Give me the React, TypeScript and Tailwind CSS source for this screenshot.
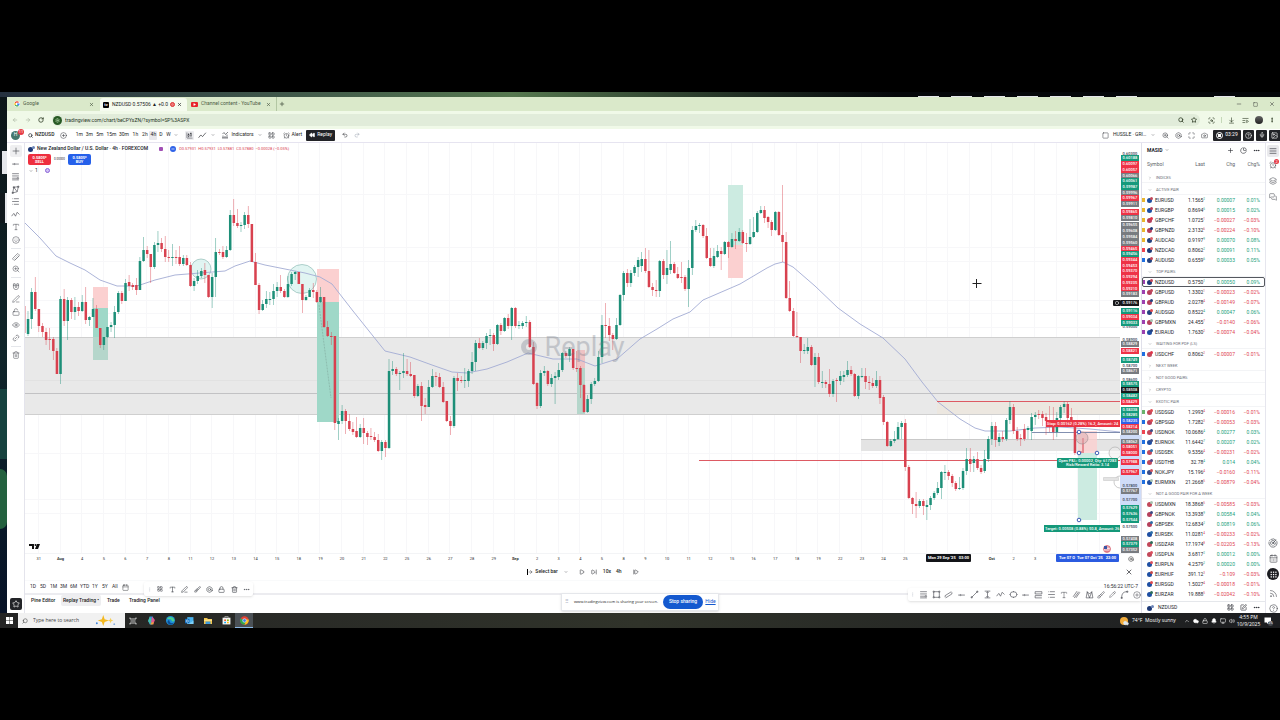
import {
  AlarmClock, ArrowDownToLine, ArrowLeft, ArrowRight, Bell, Bolt, Brush, Calendar, CalendarDays, Camera, ChartCandlestick,
  ChartPie, ChevronDown, ChevronRight, ChevronUp, Circle, CircleHelp, CirclePlus, Cloud, Ellipsis, EllipsisVertical,
  Eye, Image, Layers, LayoutGrid, Link2, ListVideo, Lock, LockOpen, Magnet, Maximize, MessagesSquare,
  Mic, Minus, Monitor, PenLine, Pencil, Play, Plus, Radar, Redo2, Rewind, RotateCw, Rss, Ruler, ScanSearch, Search,
  Settings, SkipForward, Smile, Square, SquarePen, Star, StepForward, TextAlignJustify, Trash2, Type, Undo2,
  Volume2, X, ZoomIn,
} from "lucide-react";

const UP = "#1d8f78";
const DOWN = "#d8414f";

// high, body top, body bottom, low, 1 = up / 0 = down
const candles: number[][] = [
  [311, 319, 334, 336, 1], [288, 292, 319, 329, 1], [277, 292, 309, 311, 0], [309, 309, 326, 332, 0], [323, 326, 332, 337, 0],
  [328, 332, 340, 345, 0], [328, 339, 340, 350, 0], [337, 339, 351, 360, 0], [348, 351, 374, 374, 0], [296, 299, 374, 384, 1],
  [289, 299, 321, 326, 0], [297, 300, 321, 340, 1], [298, 300, 312, 319, 0], [297, 307, 312, 320, 1], [302, 307, 311, 316, 0],
  [295, 302, 311, 312, 1], [287, 302, 320, 324, 0], [316, 317, 320, 326, 1], [298, 309, 317, 317, 1], [305, 309, 328, 328, 0],
  [328, 328, 345, 348, 0], [337, 337, 345, 350, 1], [327, 327, 337, 338, 1], [322, 325, 327, 332, 1], [306, 312, 325, 338, 1],
  [291, 293, 312, 314, 1], [291, 293, 301, 304, 0], [279, 283, 301, 301, 1], [275, 282, 286, 291, 0], [283, 285, 287, 290, 0],
  [278, 285, 290, 295, 0], [257, 261, 290, 290, 1], [237, 250, 261, 262, 1], [246, 250, 254, 258, 0], [254, 254, 267, 283, 0],
  [242, 245, 267, 269, 1], [231, 243, 245, 252, 1], [238, 243, 249, 252, 0], [236, 249, 257, 262, 0], [250, 257, 258, 262, 0],
  [244, 257, 258, 266, 1], [250, 257, 258, 264, 0], [246, 257, 264, 266, 0], [255, 258, 264, 266, 1], [255, 258, 265, 266, 0],
  [262, 265, 286, 287, 0], [278, 281, 286, 291, 1], [270, 276, 281, 284, 1], [268, 271, 276, 278, 1], [263, 270, 275, 283, 0],
  [275, 275, 297, 298, 0], [273, 277, 297, 308, 1], [238, 252, 277, 297, 1], [249, 252, 253, 255, 0], [246, 252, 257, 259, 0],
  [246, 250, 257, 258, 1], [210, 215, 250, 251, 1], [199, 215, 223, 226, 0], [209, 223, 226, 228, 0], [222, 225, 226, 232, 1],
  [212, 215, 225, 229, 1], [206, 215, 224, 228, 0], [224, 224, 262, 262, 0], [253, 262, 285, 285, 0], [283, 285, 310, 314, 0],
  [300, 304, 310, 311, 1], [291, 299, 304, 308, 1], [292, 299, 300, 305, 1], [284, 291, 299, 305, 1], [282, 287, 291, 297, 1],
  [275, 287, 291, 293, 0], [289, 291, 297, 298, 0], [276, 284, 297, 298, 1], [272, 274, 284, 286, 1], [271, 272, 274, 280, 1],
  [272, 272, 284, 284, 0], [284, 284, 300, 313, 0], [295, 297, 300, 301, 1], [288, 290, 297, 297, 1], [283, 290, 292, 298, 0],
  [290, 292, 302, 303, 0], [287, 297, 302, 303, 1], [297, 297, 327, 328, 0], [321, 327, 336, 337, 0], [332, 336, 337, 345, 0],
  [336, 336, 423, 430, 0], [418, 421, 424, 440, 1], [405, 411, 421, 424, 1], [409, 411, 421, 434, 0], [414, 421, 429, 431, 0],
  [422, 429, 432, 435, 0], [417, 431, 437, 438, 0], [424, 428, 437, 438, 1], [418, 428, 433, 444, 0], [431, 433, 437, 445, 0],
  [428, 436, 437, 440, 0], [432, 437, 440, 442, 0], [434, 440, 451, 452, 0], [440, 442, 451, 460, 1], [440, 442, 448, 457, 0],
  [359, 371, 448, 449, 1], [361, 369, 371, 375, 1], [367, 369, 374, 376, 0], [371, 373, 374, 390, 1], [353, 371, 373, 378, 1],
  [359, 371, 374, 376, 0], [362, 374, 376, 377, 0], [375, 375, 396, 398, 0], [384, 386, 396, 397, 1], [382, 386, 406, 421, 0],
  [398, 405, 407, 414, 0], [380, 387, 407, 407, 1], [369, 376, 387, 388, 1], [372, 376, 377, 386, 0], [373, 377, 387, 388, 0],
  [382, 387, 402, 403, 0], [401, 401, 421, 422, 0], [416, 421, 426, 435, 0], [376, 378, 426, 428, 1], [373, 378, 381, 391, 0],
  [376, 380, 381, 383, 0], [368, 380, 381, 388, 1], [369, 371, 381, 387, 1], [352, 362, 371, 374, 1], [340, 343, 362, 371, 1],
  [338, 343, 348, 349, 0], [341, 343, 348, 350, 1], [333, 336, 343, 349, 1], [329, 335, 336, 345, 1], [333, 335, 344, 351, 0],
  [324, 325, 344, 345, 1], [323, 325, 331, 335, 0], [317, 318, 331, 332, 1], [314, 318, 326, 329, 0], [307, 308, 326, 340, 1],
  [307, 308, 326, 328, 0], [321, 325, 326, 329, 1], [321, 323, 326, 329, 1], [316, 322, 323, 327, 1], [320, 322, 347, 348, 0],
  [342, 347, 384, 385, 0], [382, 383, 406, 409, 0], [370, 373, 406, 408, 1], [366, 371, 373, 376, 1], [370, 371, 384, 386, 0],
  [374, 378, 384, 387, 1], [372, 376, 378, 404, 1], [363, 370, 377, 380, 1], [352, 353, 370, 372, 1], [351, 353, 356, 358, 0],
  [347, 349, 356, 362, 1], [349, 349, 368, 370, 0], [351, 368, 369, 372, 0], [366, 368, 385, 398, 0], [384, 385, 412, 413, 0],
  [395, 399, 412, 413, 1], [382, 384, 399, 404, 1], [378, 381, 384, 386, 1], [351, 357, 381, 382, 1], [315, 325, 357, 363, 1],
  [303, 325, 326, 338, 0], [318, 326, 335, 341, 0], [333, 335, 339, 350, 0], [318, 325, 339, 340, 1], [294, 295, 325, 326, 1],
  [271, 273, 295, 301, 1], [269, 273, 283, 287, 0], [270, 273, 283, 287, 1], [265, 267, 273, 276, 1], [257, 260, 267, 277, 1],
  [252, 259, 266, 272, 1], [248, 259, 271, 273, 0], [250, 271, 287, 288, 0], [283, 287, 290, 296, 0], [280, 290, 291, 297, 0],
  [260, 261, 291, 297, 1], [259, 261, 275, 279, 0], [250, 268, 275, 284, 1], [241, 264, 270, 274, 1], [262, 264, 273, 274, 0],
  [267, 274, 278, 279, 0], [262, 277, 278, 283, 0], [275, 277, 289, 291, 0], [260, 268, 289, 307, 1], [226, 230, 268, 275, 1],
  [220, 226, 230, 232, 1], [223, 225, 226, 233, 1], [224, 225, 236, 238, 0], [228, 236, 258, 259, 0], [248, 258, 266, 267, 0],
  [248, 256, 266, 268, 1], [245, 251, 257, 258, 1], [247, 251, 254, 270, 0], [241, 242, 254, 255, 1], [241, 242, 247, 258, 0],
  [233, 239, 247, 248, 1], [231, 239, 241, 249, 0], [228, 232, 241, 242, 1], [230, 232, 243, 244, 0], [233, 243, 244, 252, 0],
  [219, 237, 244, 245, 1], [217, 232, 237, 238, 1], [211, 213, 232, 233, 1], [206, 210, 213, 214, 1], [206, 210, 218, 223, 0],
  [216, 217, 222, 228, 0], [220, 222, 230, 236, 0], [211, 212, 230, 231, 1], [211, 212, 235, 236, 0], [185, 235, 242, 262, 0],
  [232, 242, 298, 299, 0], [281, 298, 311, 312, 0], [308, 311, 336, 337, 0], [312, 336, 337, 338, 0], [337, 337, 351, 363, 0],
  [344, 350, 351, 354, 1], [338, 347, 351, 354, 1], [345, 347, 365, 366, 0], [353, 357, 365, 387, 1], [353, 357, 382, 384, 0],
  [371, 382, 383, 388, 1], [380, 382, 384, 388, 0], [369, 384, 394, 397, 0], [379, 381, 394, 397, 1], [378, 380, 381, 402, 0],
  [371, 376, 381, 385, 1], [371, 375, 377, 382, 1], [361, 370, 375, 377, 1], [366, 370, 374, 376, 0], [373, 374, 396, 397, 0],
  [375, 376, 396, 399, 1], [368, 376, 377, 378, 1], [368, 376, 382, 389, 0], [376, 382, 383, 390, 0], [378, 383, 386, 388, 0],
  [371, 380, 386, 388, 1], [376, 380, 398, 404, 0], [395, 397, 422, 425, 0], [421, 422, 446, 447, 0], [439, 441, 446, 447, 1],
  [431, 439, 441, 443, 1], [422, 427, 439, 440, 1], [421, 423, 427, 439, 1], [419, 423, 467, 471, 0], [465, 467, 498, 499, 0],
  [497, 498, 504, 514, 0], [492, 504, 506, 518, 0], [499, 501, 506, 508, 1], [499, 501, 506, 515, 0], [500, 505, 507, 520, 1],
  [496, 498, 505, 510, 1], [491, 493, 498, 500, 1], [482, 488, 493, 495, 1], [471, 472, 488, 499, 1], [465, 472, 473, 480, 1],
  [470, 472, 476, 480, 0], [474, 476, 483, 487, 0], [481, 483, 489, 491, 0], [477, 488, 489, 490, 1], [468, 471, 488, 490, 1],
  [448, 459, 471, 475, 1], [448, 459, 464, 472, 0], [456, 459, 463, 472, 1], [452, 459, 468, 470, 0], [465, 468, 472, 474, 0],
  [450, 459, 471, 473, 1], [436, 439, 459, 462, 1], [422, 426, 439, 445, 1], [422, 426, 440, 447, 0], [433, 437, 442, 446, 1],
  [431, 437, 439, 442, 0], [418, 420, 439, 441, 1], [401, 407, 420, 424, 1], [404, 407, 431, 434, 0], [427, 431, 439, 441, 0],
  [434, 438, 439, 446, 0], [424, 429, 439, 441, 0], [426, 428, 430, 439, 1], [413, 417, 431, 440, 1], [412, 415, 417, 425, 1],
  [410, 414, 415, 419, 0], [411, 414, 418, 426, 0], [413, 417, 421, 435, 0], [406, 421, 424, 432, 0], [407, 424, 432, 440, 0],
  [412, 418, 432, 437, 1], [405, 407, 418, 420, 1], [401, 404, 407, 413, 1], [402, 404, 418, 424, 0], [408, 417, 424, 426, 0],
  [422, 423, 453, 455, 0],
];

const xOf = (i: number) => 28 + i * 3.61;

const average =
  "25,223 40,238 56,256 70,263 85,270 100,280 117,286 137,286 155,280 175,275 200,273 225,271 235,266 250,261 265,265 285,269 305,273 320,277 332,284 353,311 385,351 410,357 432,365 452,372 467,373 487,369 507,362 528,353 553,359 577,359 595,366 617,359 640,339 657,329 673,319 690,312 703,300 740,284 767,268 775,264 783,262 793,267 815,286 838,308 860,324 883,338 905,359 922,382 938,402 960,419 975,428 985,431 1010,431 1035,428 1060,427 1090,429 1120,432";

const tone: Record<string, string> = {
  p: "text-gray-700 bg-white",
  g: "bg-[#159a7c] text-white",
  r: "bg-[#ee3347] text-white",
  n: "bg-[#787b80] text-white",
  k: "bg-[#17181b] text-white",
  b: "bg-[#2f62e8] text-white",
  l: "text-gray-700",
};

const prices: [number, string, string][] = [
  [154, "0.60300", "p"], [158, "0.60188", "g"], [164, "0.60097", "r"], [170, "0.60057", "r"], [176, "0.60066", "n"],
  [181, "0.60061", "g"], [187, "0.59987", "g"], [193, "0.59996", "n"], [198, "0.59967", "r"], [204, "0.59911", "n"],
  [212, "0.59865", "r"], [218, "0.59810", "n"], [225, "0.59655", "n"], [231, "0.59608", "n"], [237, "0.59584", "n"],
  [243, "0.59560", "n"], [249, "0.59465", "r"], [254, "0.59456", "g"], [260, "0.59344", "r"], [266, "0.59453", "r"],
  [271, "0.59370", "r"], [277, "0.59294", "r"], [283, "0.59235", "r"], [289, "0.59210", "r"], [294, "0.59183", "n"],
  [303, "0.59176", "k"], [327, "0.59000", "p"], [311, "0.59116", "g"], [317, "0.59034", "r"], [323, "0.59033", "g"],
  [340, "0.58900", "p"], [344, "0.58829", "n"], [351, "0.58821", "r"], [360, "0.58749", "g"], [366, "0.58700", "p"],
  [371, "0.58671", "n"], [380, "0.58600", "p"], [384, "0.58575", "g"], [390, "0.58508", "k"], [396, "0.58482", "g"],
  [402, "0.58429", "r"], [410, "0.58338", "g"], [415, "0.58285", "g"], [421, "0.58235", "b"], [427, "0.58214", "r"],
  [432, "0.58200", "n"], [442, "0.58062", "n"], [447, "0.58051", "r"], [453, "0.58000", "r"], [462, "0.57988", "r"],
  [472, "0.57967", "r"], [486, "0.57800", "l"], [491, "0.57767", "n"], [500, "0.57700", "l"], [508, "0.57629", "g"],
  [514, "0.57636", "g"], [520, "0.57544", "g"], [527, "0.57500", "p"], [539, "0.57408", "n"], [544, "0.57379", "g"],
  [550, "0.57352", "n"],
];

const days =
  "31 Aug 4 5 6 7 8 11 12 13 14 15 18 19 20 21 22 25 26 27 28 29 Sep 2 3 4 5 8 9 10 11 12 15 16 17 18 19 22 23 24 25 - - - Oct 2 3 - - -".split(" ");

// symbol, last, small digit, change, change %, flag colour
type Quote = [string, string, string, string, string, string];
type Group = { title: string; open: boolean; rows: Quote[] };

const groups: Group[] = [
  { title: "INDICES", open: false, rows: [] },
  {
    title: "ACTIVE PAIR",
    open: true,
    rows: [
      ["EURUSD", "1.1565", "2", "0.00007", "0.01%", "y"],
      ["EURGBP", "0.8694", "6", "0.00015", "0.02%", "y"],
      ["GBPCHF", "1.0725", "1", "−0.00027", "−0.03%", "y"],
      ["GBPNZD", "2.3132", "6", "−0.00224", "−0.10%", "y"],
      ["AUDCAD", "0.9197", "9", "0.00070", "0.08%", "y"],
      ["NZDCAD", "0.8062", "2", "0.00091", "0.11%", "r"],
      ["AUDUSD", "0.6559", "6", "0.00033", "0.05%", "b"],
    ],
  },
  {
    title: "TOP PAIRS",
    open: true,
    rows: [
      ["NZDUSD", "0.5750", "1", "0.00050", "0.09%", "p"],
      ["GBPUSD", "1.3302", "1", "−0.00023", "−0.02%", "p"],
      ["GBPAUD", "2.0278", "4", "−0.00149", "−0.07%", "p"],
      ["AUDSGD", "0.8522", "4", "0.00047", "0.06%", "p"],
      ["GBPMXN", "24.455", "7", "−0.0140", "−0.06%", "p"],
      ["EURAUD", "1.7630", "2", "−0.00074", "−0.04%", "p"],
    ],
  },
  { title: "WAITING FOR PDF (LS)", open: true, rows: [["USDCHF", "0.8062", "2", "−0.00007", "−0.01%", "b"]] },
  { title: "NEXT WEEK", open: false, rows: [] },
  { title: "NOT GOOD PAIRS", open: false, rows: [] },
  { title: "CRYPTO", open: false, rows: [] },
  {
    title: "EXOTIC PAIR",
    open: true,
    rows: [
      ["USDSGD", "1.2993", "4", "−0.00016", "−0.01%", "g"],
      ["GBPSGD", "1.7282", "3", "−0.00053", "−0.03%", "b"],
      ["USDNOK", "10.0686", "4", "0.00277", "0.03%", "r"],
      ["EURNOK", "11.6442", "7", "0.00207", "0.02%", "b"],
      ["USDSEK", "9.5356", "4", "−0.00231", "−0.02%", "b"],
      ["USDTHB", "32.78", "4", "0.014", "0.04%", "b"],
      ["NOKJPY", "15.196", "4", "−0.0160", "−0.11%", "b"],
      ["EURMXN", "21.2668", "5", "−0.00879", "−0.04%", "b"],
    ],
  },
  {
    title: "NOT A GOOD PAIR FOR A WEEK",
    open: true,
    rows: [
      ["USDMXN", "18.3868", "5", "−0.00585", "−0.03%", ""],
      ["GBPNOK", "13.3938", "9", "0.00584", "0.04%", ""],
      ["GBPSEK", "12.6834", "2", "0.00819", "0.06%", ""],
      ["EURSEK", "11.0281", "4", "−0.00233", "−0.02%", ""],
      ["USDZAR", "17.1974", "8", "−0.02205", "−0.13%", ""],
      ["USDPLN", "3.6817", "2", "0.00012", "0.00%", ""],
      ["EURPLN", "4.2579", "2", "0.00020", "0.00%", ""],
      ["EURHUF", "391.12", "3", "−0.109", "−0.03%", ""],
      ["EURSGD", "1.5027", "4", "−0.00018", "−0.01%", ""],
      ["EURZAR", "19.888", "5", "−0.02042", "−0.10%", ""],
    ],
  },
];

const flags: Record<string, string> = {
  y: "bg-[#e9b62f]",
  r: "bg-[#ee4450]",
  b: "bg-[#1f6fe0]",
  p: "bg-[#9c3fae]",
  g: "bg-[#68b36b]",
  "": "bg-transparent",
};

const coin: Record<string, string> = {
  EUR: "bg-[#1f4fa3]", USD: "bg-[#c2485a]", GBP: "bg-[#b5405c]", CHF: "bg-[#e0354a]", NZD: "bg-[#1e3a78]", AUD: "bg-[#24427f]",
  CAD: "bg-[#d9646d]", SGD: "bg-[#de4a4f]", MXN: "bg-[#a6c3b0]", NOK: "bg-[#3b4d86]", SEK: "bg-[#2e6fa8]", THB: "bg-[#554785]",
  JPY: "bg-[#d25560]", ZAR: "bg-[#2d6e5a]", PLN: "bg-[#db4f5e]", HUF: "bg-[#c6484a]",
};

// drawing-tool glyphs, all on a 16 grid
const glyphs: Record<string, string> = {
  line: "M2 9h3M7 9h7M5 9a1 1 0 1 0 2 0a1 1 0 1 0-2 0",
  fib: "M2 3h12M2 7h12M2 11h9M2 14h12M11 11a1.3 1.3 0 1 0 2.6 0a1.3 1.3 0 1 0-2.6 0",
  pattern: "M3 14L5 4l6 8 2-9M3 14l8-2M5 4l8-1M2 13h2v2H2zM4 3h2v2H4zM12 2h2v2h-2z",
  forecast: "M5 3h9M2 3h1M2 8h12M5 13h9M2 13h1",
  waves: "M1 11l4-5 3 5 3-7 4 4",
  rect: "M4 3h8M4 13h8M3 4v8M13 4v8M2 2h2v2H2zM12 2h2v2h-2zM2 12h2v2H2zM12 12h2v2h-2z",
  channel: "M2 10l11-7M3 14l11-7M2 10v3M14 4v3",
  trend: "M3 13L13 3M2 12h2v2H2zM12 2h2v2h-2z",
  range: "M3 2h10M3 14h10M8 3v10M6 5l2-2 2 2M6 11l2 2 2-2",
  ellipse: "M2 8a6 5 0 1 0 12 0a6 5 0 1 0-12 0M1 8h2M13 8h2M8 2v2M8 12v2",
  long: "M2 3h12v4H2zM2 10h12M2 14h12M2 10v4",
  parallel: "M2 12L9 2M7 14L14 4M4 14l8-11",
  fan: "M2 14L4 3l4 11 4-11 2 11M2 14h12M4 3l4 4 4-4",
  curve: "M3 14c0-8 3-11 10-11M2 13h2v2H2zM12 2h2v2h-2z",
  steps: "M1 12l4-5 3 3 6-7",
  indicators: "M2 14h12M3 6l3-3 3 4 5-5M4 9v5M8 10v4M12 7v7",
};

const Glyph = ({ name, cls = "size-[9px]" }: { name: string; cls?: string }) => (
  <svg viewBox="0 0 16 16" className={cls} fill="none" stroke="currentColor" strokeWidth="1.1">
    <path d={glyphs[name]} />
  </svg>
);

const Pair = ({ name }: { name: string }) => (
  <span className="flex w-[7px] items-start">
    <span className={`mt-px size-[5px] rounded-full ${coin[name.slice(0, 3)]}`} />
    <span className={`-ml-[2px] size-[3px] rounded-full ${coin[name.slice(3)]}`} />
  </span>
);

const TabStrip = () => (
  <div className="flex h-[14px] items-stretch bg-[#dae9ca] text-[5px] text-[#4c5a45]">
    <div className="flex w-[93px] items-center pl-[7px] pr-[6px]">
      <svg viewBox="0 0 24 24" className="mr-[3px] size-[6px] shrink-0">
        <path fill="#fff" d="M0 12a12 12 0 1 1 24 0a12 12 0 1 1-24 0" />
        <path fill="none" stroke="#ea4335" strokeWidth="5" d="M5 8a8 8 0 0 1 13-2" />
        <path fill="none" stroke="#fbbc05" strokeWidth="5" d="M5 16a8 8 0 0 1 0-8" />
        <path fill="none" stroke="#34a853" strokeWidth="5" d="M17 18a8 8 0 0 1-12-2" />
        <path fill="none" stroke="#4285f4" strokeWidth="5" d="M12 12h8a8 8 0 0 1-3 6" />
      </svg>
      <span className="flex-1">Google</span>
      <X size={5} strokeWidth={3} />
    </div>
    <div className="mt-px flex w-[87px] items-center rounded-t-[3px] bg-[#f5fbef] pl-[3px] pr-[5px] text-[#222]">
      <span className="mr-[3px] flex size-[6px] shrink-0 items-center justify-center rounded-[1px] bg-black text-[4px] font-bold leading-none text-white">tv</span>
      <span className="whitespace-nowrap">NZDUSD 0.57506 ▲ +0.0</span>
      <span className="mx-auto size-[5px] shrink-0 rounded-full border border-[#d33] bg-[#e77]" />
      <X size={5} strokeWidth={3} />
    </div>
    <div className="flex w-[90px] items-center border-r border-[#b3c7a3] pl-1 pr-[5px]">
      <span className="mr-[3px] flex h-[5px] w-[7px] shrink-0 items-center justify-center rounded-[1px] bg-[#e8212b]">
        <Play size={3} fill="#fff" color="#fff" />
      </span>
      <span className="whitespace-nowrap">Channel content - YouTube</span>
      <X size={5} strokeWidth={3} className="ml-auto" />
    </div>
    <button aria-label="New tab" className="px-[2px]"><Plus size={6} strokeWidth={3} /></button>
    <div className="ml-auto flex items-center gap-[11px] pr-[5px] text-[#333]">
      <Minus size={6} />
      <Square size={5} />
      <X size={6} />
    </div>
  </div>
);

const AddressBar = () => (
  <div className="flex h-[18px] items-center bg-[#f0f9e8] text-[#28361f]">
    <div className="flex w-[45px] items-center gap-[7px] pl-[5px]">
      <ArrowLeft size={6} className="text-[#9aa691]" />
      <ArrowRight size={6} className="text-[#9aa691]" />
      <RotateCw size={6} strokeWidth={3} />
    </div>
    <div className="flex h-3 flex-1 items-center rounded-full bg-[#e1ecda] pl-px pr-[3px]">
      <span className="mr-[3px] flex size-[9px] items-center justify-center rounded-full bg-[#285a24]">
        <Settings size={5} color="#d8f5cf" />
      </span>
      <input
        aria-label="Address"
        className="h-3 min-w-0 flex-1 bg-transparent text-[5px] outline-none"
        defaultValue="tradingview.com/chart/beCPYsZN/?symbol=SP%3ASPX"
      />
      <Search size={6} strokeWidth={3} className="mr-[7px]" />
      <Star size={6} strokeWidth={3} />
    </div>
    <div className="flex w-[80px] items-center justify-between pl-2 pr-[5px]">
      <ScanSearch size={7} />
      <span className="h-[6px] w-px bg-[#c5d8b8]" />
      <ArrowDownToLine size={7} />
      <ListVideo size={7} />
      <span className="size-[8px] rounded-full bg-gradient-to-b from-[#666] to-[#222]" />
      <EllipsisVertical size={6} strokeWidth={3} />
    </div>
  </div>
);

const intervals: [string, string][] = [
  ["1m", "w-[10px]"], ["3m", "w-[10px]"], ["5m", "w-[11px]"], ["15m", "w-[12px]"], ["30m", "w-[13px]"],
  ["1h", "w-[10px]"], ["2h", "w-[9px]"], ["4h", "w-[8px] rounded-[1px] bg-[#e8e8ec]"], ["D", "w-[7px]"], ["W", "w-[8px]"],
];

const ChartToolbar = () => (
  <div className="flex h-[14px] items-center border-b border-[#e6e4f0] bg-white pb-px text-[5px] text-[#1c1e24]">
    <div className="relative ml-1 flex size-[9px] items-center justify-center rounded-full bg-[#44776d] text-white">
      H
      <span className="absolute -right-[4px] -top-[2px] flex size-[6px] items-center justify-center rounded-full bg-[#e53945] text-[4px] leading-none">11</span>
    </div>
    <button className="ml-2 flex items-center gap-[2px] font-medium"><Search size={5} strokeWidth={3} />NZDUSD</button>
    <CirclePlus size={7} strokeWidth={1.5} className="ml-[6px]" />
    <div className="ml-[7px] flex">
      {intervals.map(([label, cls]) => (
        <button key={label} className={`h-[9px] text-center ${cls}`}>{label}</button>
      ))}
    </div>
    <ChevronDown size={4} className="ml-[2px]" />
    <span className="ml-[7px] flex size-[9px] items-center justify-center rounded-[1px] bg-[#ececef]"><ChartCandlestick size={7} strokeWidth={1.5} /></span>
    <Glyph name="steps" cls="ml-1 size-[9px]" />
    <ChevronDown size={4} className="ml-1" />
    <button className="ml-[6px] flex items-center gap-[2px]"><Glyph name="indicators" cls="size-2" />Indicators</button>
    <ChevronDown size={4} className="ml-1" />
    <LayoutGrid size={7} strokeWidth={1.5} className="ml-[6px]" />
    <button className="ml-2 flex items-center gap-[2px]"><AlarmClock size={7} strokeWidth={1.5} />Alert</button>
    <button className="ml-1 flex h-[11px] items-center gap-[2px] rounded-[1px] bg-[#222327] px-[3px] text-white">
      <Rewind size={6} fill="#fff" />Replay
    </button>
    <Undo2 size={6} className="ml-[7px]" />
    <Redo2 size={6} className="ml-[6px] text-gray-400" />
    <div className="ml-auto flex items-center">
      <Square size={7} strokeWidth={1.5} />
      <span className="ml-1 mr-[2px] w-[36px] whitespace-nowrap">HUSSLE · GRI…</span>
      <ChevronDown size={4} />
      <div className="ml-[7px] mr-[5px] flex items-center gap-[6px]">
        <ZoomIn size={7} strokeWidth={1.5} />
        <Bolt size={7} strokeWidth={1.5} />
        <Maximize size={7} strokeWidth={1.5} />
        <Camera size={7} strokeWidth={1.5} />
      </div>
      <div className="flex h-[11px] gap-[2px] text-white">
        <span className="flex w-7 items-center justify-center gap-[2px] rounded-[1px] bg-[#222327]">
          <span className="flex size-[7px] items-center justify-center rounded-full border border-white"><span className="size-[3px] bg-white" /></span>
          03:29
        </span>
        <span className="flex w-[11px] items-center justify-center rounded-[1px] bg-[#222327]"><CircleHelp size={7} /></span>
        <span className="flex w-[11px] items-center justify-center rounded-[1px] bg-[#222327]"><Mic size={6} /></span>
        <span className="flex w-[11px] items-center justify-center rounded-l-[1px] bg-[#222327]"><Image size={7} /></span>
      </div>
    </div>
  </div>
);

const DrawingTools = () => {
  const btn = "flex h-3 w-[12px] items-center justify-center";
  return (
    <div className="flex w-[18px] shrink-0 flex-col items-center border-r border-[#e4e4ec] bg-white pt-[2px] text-[#44464e]">
      <div className="flex h-[101px] flex-col justify-between">
        <button aria-label="Cross" className={`${btn} rounded-[2px] bg-[#efeff1]`}><Plus size={10} strokeWidth={1.5} /></button>
        <button aria-label="Trend line" className={btn}><Glyph name="line" /></button>
        <button aria-label="Fib" className={btn}><Glyph name="fib" /></button>
        <button aria-label="Pattern" className={btn}><Glyph name="pattern" /></button>
        <button aria-label="Forecast" className={btn}><Glyph name="forecast" /></button>
        <button aria-label="Waves" className={btn}><Glyph name="waves" /></button>
        <button aria-label="Text" className={btn}><Type size={8} strokeWidth={1.5} /></button>
        <button aria-label="Icons" className={btn}><Smile size={8} strokeWidth={1.5} /></button>
      </div>
      <span className="my-[2px] h-px w-[10px] bg-gray-200" />
      <button aria-label="Measure" className={btn}><Ruler size={8} strokeWidth={1.5} className="rotate-90" /></button>
      <button aria-label="Zoom" className={btn}><ZoomIn size={8} strokeWidth={1.5} /></button>
      <span className="my-[2px] h-px w-[10px] bg-gray-200" />
      <div className="flex h-[64px] flex-col justify-between">
        <button aria-label="Magnet" className={btn}><Magnet size={8} strokeWidth={1.5} className="rotate-[135deg]" /></button>
        <button aria-label="Keep drawing" className={btn}><PenLine size={8} strokeWidth={1.5} /></button>
        <button aria-label="Lock" className={btn}><LockOpen size={8} strokeWidth={1.5} /></button>
        <button aria-label="Hide" className={btn}><Eye size={8} strokeWidth={1.5} /></button>
        <button aria-label="Link" className={btn}><Link2 size={8} strokeWidth={1.5} className="-rotate-45" /></button>
      </div>
      <span className="my-[2px] h-px w-[10px] bg-gray-200" />
      <button aria-label="Remove" className={btn}><Trash2 size={8} strokeWidth={1.5} /></button>
      <button aria-label="Favorites" className="mb-[3px] mt-auto flex size-3 items-center justify-center rounded-[2px] bg-[#232428] text-white"><Star size={8} /></button>
    </div>
  );
};

const Plot = () => (
  <svg viewBox="25 143 1095 410" preserveAspectRatio="xMidYMid slice" className="h-[410px] w-full">
    <g stroke="#f7f7f9">
      {days.map((_, i) => <path key={i} d={`M${38.5 + Math.round(i * 21.65)} 143V553`} />)}
      {[194, 247, 261, 300, 313, 327, 453, 499, 513].map((y) => <path key={y} d={`M25 ${y}.5H1120`} />)}
    </g>
    <path d="M25 337H1120V414H25z" fill="#e9e9e9" />
    <path d="M937 402H1120V414H937z" fill="#ece7e0" />
    <path d="M25 380.5H1120" stroke="#e2e2e2" />
    <path d="M25 337.5H1120M25 414.5H1120" stroke="#cfcfcf" />
    <path d="M25 393.5H1120" stroke="#c2c2c4" />
    <path d="M861 439H1120V451H861z" fill="#e4e4e4" />
    <path d="M861 439.5H1120" stroke="#c9c9c9" />

    <g fill="#fbd0d0">
      <path d="M93 287h15v21h-15z" />
      <path d="M317 269h22v33h-22z" />
      <path d="M728 245h15v33h-15z" />
      <path d="M1078 431h19v22h-19z" opacity="0.8" />
    </g>
    <path d="M577 350h8v18h-8z" fill="#eec3c4" />
    <g fill="#9fd8c8">
      <path d="M93 308h15v29h-15z" />
      <path d="M317 302h22v120h-22z" />
    </g>
    <path d="M93 337h15v23h-15zM577 368h8v46h-8z" fill="#b5d6cb" />
    <path d="M728 185h15v60h-15zM1078 453h19v67h-19z" fill="#ccebe1" />
    <g fill="#cdeeea" fillOpacity="0.6" stroke="#8fbcb6" strokeWidth="0.7">
      <circle cx="201" cy="269" r="10" />
      <circle cx="302" cy="279" r="14.5" />
    </g>
    <path d="M319 305L331 398" stroke="#7fa79c" strokeWidth="0.6" strokeDasharray="2 1" />

    <polyline points={average} fill="none" stroke="#a3abd4" strokeWidth="0.9" />
    <path d="M937 401.5H1120M699 460.5H1120" stroke="#dd5a63" />
    <path d="M1032 432.5H1120" stroke="#62749c" strokeWidth="0.8" />

    {candles.map(([high, top, bottom, low, up], i) => (
      <g key={i} fill={up ? UP : DOWN}>
        <rect x={xOf(i) - 0.3} y={high} width="0.6" height={low - high} opacity="0.7" />
        <rect x={xOf(i) - 1.2} y={top} width="2.5" height={Math.max(bottom - top, 1)} />
      </g>
    ))}
    <path d="M25.5 306V333" stroke="#efb6bb" />
    <path d="M1083 438v13M1080 452h4" stroke={DOWN} />

    <circle cx="1082" cy="438" r="6" fill="#d9a9ad" fillOpacity="0.5" stroke="#9b8f92" strokeWidth="0.6" />
    <circle cx="1115" cy="453" r="6" fill="#eee" fillOpacity="0.5" stroke="#a8a8a8" strokeWidth="0.6" />
    <path d="M1120 476a6 6 0 0 0 0 12" fill="none" stroke="#a8a8a8" strokeWidth="0.6" />
    <path d="M1103.5 477.5h15v3h-15z" fill="#e3e3e3" stroke="#c9c9c9" strokeWidth="0.6" />
    <g fill="#fff" stroke="#3c5bb5">
      <circle cx="1079" cy="432" r="1.8" />
      <circle cx="1079" cy="453" r="1.8" />
      <circle cx="1097" cy="453" r="1.8" />
      <circle cx="1079" cy="520" r="1.8" />
    </g>
    <path d="M972.5 283.5h9M976.5 279v9" stroke="#222" />
    <g>
      <circle cx="1107" cy="549" r="3.5" fill="#f6dfe3" stroke="#d5596a" strokeWidth="0.8" />
      <path d="M1104 546h3v3h-3z" fill="#3b57a5" />
      <path d="M1107 547h3M1105 550h5M1105 551.5h4" stroke="#d5596a" strokeWidth="0.7" />
    </g>
    <path d="M29 544h5v5h-2v-3h-3zM37 544h3l-2 5h-3z" fill="#111" />
    <circle cx="35.5" cy="545" r="1" fill="#111" />
  </svg>
);

const Legend = () => (
  <div className="absolute left-[3px] top-[2px] text-[5px] leading-none text-[#22242a]">
    <div className="flex h-[7px] items-center">
      <span className="mr-[2px] flex items-start">
        <span className="mt-px size-[5px] rounded-full bg-[#1e3a78]" />
        <span className="-ml-px size-[3px] rounded-full bg-[#6d86b8]" />
      </span>
      <h1 className="w-[122px] whitespace-nowrap font-medium">New Zealand Dollar / U.S. Dollar · 4h · FOREXCOM</h1>
      <span className="mr-[7px] size-1 rounded-[1px] bg-[#a14fb5]" />
      <span className="mr-[3px] flex size-[6px] items-center justify-center rounded-full bg-[#2f62e8] text-white"><Minus size={4} strokeWidth={4} /></span>
      <p className="whitespace-nowrap text-[4px] text-[#d8414f]">
        O0.57931 &nbsp;H0.57931 &nbsp;L0.57881 &nbsp;C0.57880 &nbsp;−0.00028 (−0.05%)
      </p>
    </div>
    <div className="mt-[2px] flex items-center text-center">
      <button className="h-[11px] w-[23px] rounded-[2px] bg-[#ee2f3f] text-[4px] font-bold leading-[4px] text-white">0.5805⁰<br />SELL</button>
      <span className="w-[17px] text-[3px]">0.00000</span>
      <button className="h-[11px] w-[23px] rounded-[2px] bg-[#2560ea] text-[4px] font-bold leading-[4px] text-white">0.5805⁰<br />BUY</button>
    </div>
    <div className="mt-[3px] flex items-center gap-[2px] pl-px">
      <ChevronDown size={4} />1
      <span className="ml-[5px] size-[5px] rounded-full border border-[#8a63d8] bg-[#cfc0f3]" />
    </div>
  </div>
);

const ChartPane = () => (
  <div className="flex">
    <div className="relative min-w-0 flex-1 overflow-hidden">
      <Plot />
      <div className="pointer-events-none absolute inset-x-0 top-[190px] flex items-center justify-center gap-2 text-[27px] leading-7 text-gray-500 opacity-30">
        <span className="size-[16px] rounded-full border-[5px] border-gray-500" />
        Replay
      </div>
      <Legend />
      <span className="absolute right-0 top-[277px] h-[7px] w-[74px] whitespace-nowrap bg-[#ea3443] pl-px text-[4px] font-medium leading-[7px] text-white">
        Stop: 0.00162 (0.28%) 16.2, Amount: 24
      </span>
      <span className="absolute right-[2px] top-[315px] h-[10px] w-[61px] whitespace-nowrap rounded-[1px] bg-[#149879] pt-px text-center text-[4px] font-medium leading-[4px] text-white">
        Open P&amp;L: 0.00002, Qty: 617283<br />Risk/Reward Ratio: 3.14
      </span>
      <span className="absolute right-0 top-[382px] h-[7px] w-[76px] whitespace-nowrap bg-[#149879] pl-px text-[4px] font-medium leading-[7px] text-white">
        Target: 0.00508 (0.88%) 50.8, Amount: 26
      </span>
    </div>
    <div className="relative w-[21px] shrink-0 bg-white text-[4px] font-medium">
      <span className="absolute left-0 top-[292px] h-[86px] w-[21px] bg-[#cfdcf8]" />
      <span className="absolute -left-[7px] top-[157px] flex h-[6px] w-2 items-center justify-center rounded-[1px] bg-[#17181b] text-white"><Circle size={4} strokeWidth={3} /></span>
      {prices.map(([y, label, t]) => (
        <span key={label} style={{ top: y - 146 }} className={`absolute left-px h-[6px] w-[18px] text-center leading-[6px] ${tone[t]}`}>
          {label}
        </span>
      ))}
    </div>
  </div>
);

const TimeAxis = () => (
  <div className="relative flex h-[10px] items-center border-t border-gray-100 text-[4px] text-[#333]">
    <div className="ml-[3px] mr-[9px] grid flex-1 grid-cols-[repeat(50,minmax(0,1fr))] text-center">
      {days.map((d, i) => (
        <span key={i} className={d.length > 2 ? "font-bold" : ""}>{d === "-" ? "" : d}</span>
      ))}
    </div>
    <div className="flex w-[21px] justify-center"><Bolt size={6} /></div>
    <span className="absolute right-[170px] top-0 h-2 w-[45px] rounded-[1px] bg-[#131418] text-center font-bold leading-[8px] text-white">Mon 29 Sep '25 &nbsp; 03:00</span>
    <span className="absolute right-[22px] top-0 h-2 w-[63px] rounded-[1px] bg-[#2b5be0] text-center font-bold leading-[8px] text-white">Tue 07 O &nbsp;Tue 07 Oct '25 &nbsp; 22:00</span>
  </div>
);

const ReplayBar = () => (
  <div className="relative flex h-[17px] items-center justify-center text-[5px] font-medium">
    <button className="flex items-center gap-[2px]"><ArrowRight size={6} className="border-l border-black" />Select bar<ChevronDown size={4} className="ml-[4px]" /></button>
    <button aria-label="Play" className="ml-[11px]"><Play size={6} /></button>
    <button aria-label="Forward" className="ml-[6px]"><SkipForward size={6} /></button>
    <button className="ml-[6px]">10x</button>
    <button className="ml-[5px]">4h</button>
    <button aria-label="Jump to real time" className="ml-[11px]"><StepForward size={6} className="rotate-180 -scale-x-100" /></button>
    <button aria-label="Close replay" className="absolute right-2"><X size={8} /></button>
  </div>
);

const Ranges = () => (
  <div className="relative flex h-[13px] items-center border-t border-gray-50 pl-[5px] text-[5px] text-[#2b2d33]">
    {["1D", "5D", "1M", "3M", "6M"].map((r) => <button key={r} className="w-[10px] text-left">{r}</button>)}
    <button className="w-[12px] text-left">YTD</button>
    {["1Y", "5Y", "All"].map((r) => <button key={r} className="w-[10px] text-left">{r}</button>)}
    <Calendar size={7} strokeWidth={1.5} />
    <span className="ml-auto pr-[3px]">16:56:22 UTC-7</span>
    <div className="absolute left-[119px] top-px z-10 flex h-[14px] w-[109px] items-center justify-between rounded-[2px] bg-white px-[3px] text-[#44464e] shadow">
      <EllipsisVertical size={5} className="text-gray-300" />
      <LayoutGrid size={6} /><Type size={7} /><PenLine size={7} /><Brush size={7} /><Bolt size={7} /><Lock size={7} /><Trash2 size={7} /><Ellipsis size={7} />
    </div>
    <div className="absolute right-0 top-[7px] z-10 flex h-[13px] w-[233px] items-center justify-between rounded-l-[2px] bg-white pl-[2px] text-[#44464e] shadow">
      <EllipsisVertical size={5} className="text-gray-300" />
      <Glyph name="fib" /><Glyph name="rect" /><Glyph name="channel" /><Glyph name="line" /><Glyph name="trend" /><Glyph name="range" />
      <Glyph name="waves" /><Glyph name="ellipse" /><Glyph name="line" /><Glyph name="long" /><Glyph name="forecast" /><Type size={8} strokeWidth={1.5} />
      <Glyph name="parallel" /><Glyph name="fan" /><Brush size={8} strokeWidth={1.5} /><Pencil size={7} strokeWidth={1.5} /><Glyph name="curve" /><CirclePlus size={8} strokeWidth={1.5} />
    </div>
  </div>
);

const BottomTabs = () => (
  <div className="relative flex h-5 items-start border-t-2 border-[#ececf0] pl-[6px] text-[5px] font-medium">
    <button className="h-[11px] w-[30px] text-left">Pine Editor</button>
    <button className="h-[11px] w-[40px] rounded-[2px] bg-[#eeeef0]">Replay Trading •</button>
    <button className="ml-[6px] h-[11px] w-[22px] text-left">Trade</button>
    <button className="h-[11px]">Trading Panel</button>
    <div className="absolute -top-[2px] right-[422px] z-10 flex h-[18px] w-[158px] items-center rounded-[1px] border border-gray-200 bg-white pl-[3px] font-normal shadow">
      <span className="mr-[5px] text-gray-400">⠿</span>
      <span className="whitespace-nowrap font-['Open_Sans',sans-serif] text-[4px]">www.tradingview.com is sharing your screen.</span>
      <button className="ml-auto h-[14px] w-10 shrink-0 whitespace-nowrap rounded-full bg-[#1459cf] font-medium text-white">Stop sharing</button>
      <a href="#hide" className="w-[15px] shrink-0 text-center text-[#1459cf] underline">Hide</a>
    </div>
  </div>
);

const Watchlist = () => (
  <aside className="flex w-[124px] shrink-0 flex-col border-l border-[#e0e0ea] bg-white text-[5px] leading-none text-[#26282e]">
    <div className="flex h-[14px] items-center pl-[5px] pr-[5px]">
      <button className="flex items-center gap-[2px] font-bold">MASID<ChevronDown size={4} /></button>
      <div className="ml-auto flex items-center gap-[6px]"><Plus size={7} /><ChartPie size={7} /><Ellipsis size={7} strokeWidth={3} /></div>
    </div>
    <table className="w-full table-fixed border-separate border-spacing-0">
      <thead>
        <tr className="h-[14px] text-right text-[#5c5f68]">
          <th className="w-[37px] pl-[5px] text-left font-normal">Symbol</th>
          <th className="w-[26px] font-normal">Last</th>
          <th className="w-[30px] font-normal">Chg</th>
          <th className="pr-[5px] font-normal">Chg%</th>
        </tr>
      </thead>
      {groups.map((g) => (
        <tbody key={g.title}>
          <tr className="h-3">
            <td colSpan={4} className="border-b border-gray-100 pt-[2px] text-[4px] text-[#6b6e77]">
              <span className="flex items-center gap-1 pl-[6px]">
                {g.open ? <ChevronDown size={4} /> : <ChevronRight size={4} />}{g.title}
              </span>
            </td>
          </tr>
          {g.rows.map(([name, last, tail, chg, pct, flag]) => {
            const red = chg.startsWith("−");
            return (
              <tr key={name} className={name === "NZDUSD" ? "h-[10px] rounded-[2px] outline -outline-offset-1 outline-[#55585f]" : "h-[10px]"}>
                <td>
                  <span className="flex items-center">
                    <span className={`mr-[2px] h-1 w-[3px] ${flags[flag]}`} />
                    <Pair name={name} />
                    <span className="pl-px">{name}</span>
                  </span>
                </td>
                <td className="text-right">
                  {last}<sup className={red ? "text-[3px] text-[#d8414f]" : "text-[3px] text-[#1d9f7c]"}>{tail}</sup>
                </td>
                <td className={red ? "text-right text-[#e04552]" : "text-right text-[#1d9f7c]"}>{chg}</td>
                <td className={red ? "pr-[5px] text-right text-[#e04552]" : "pr-[5px] text-right text-[#1d9f7c]"}>{pct}</td>
              </tr>
            );
          })}
        </tbody>
      ))}
    </table>
    <div className="mt-auto flex h-3 items-center border-t border-gray-200 pl-[5px] pr-[5px]">
      <span className="mr-1 flex items-start">
        <span className="mt-px size-[5px] rounded-full bg-[#1e3a78]" />
        <span className="-ml-px size-[3px] rounded-full bg-[#6d86b8]" />
      </span>
      NZDUSD
      <div className="ml-auto flex items-center gap-[6px]"><LayoutGrid size={7} /><SquarePen size={7} /><Ellipsis size={7} strokeWidth={3} /></div>
    </div>
  </aside>
);

const SideBar = () => (
  <nav className="flex w-[15px] shrink-0 flex-col items-center border-l border-[#e6e6ee] bg-white pt-[2px] text-[#3c3e46]">
    <button aria-label="Watchlist" className="flex size-3 items-center justify-center rounded-[2px] bg-[#e9e9ec]"><TextAlignJustify size={8} /></button>
    <button aria-label="Alerts" className="relative mt-1">
      <AlarmClock size={8} strokeWidth={1.5} />
      <span className="absolute -right-[2px] -top-[2px] flex size-[5px] items-center justify-center rounded-full bg-[#e53945] text-[4px] leading-none text-white">2</span>
    </button>
    <button aria-label="Object tree" className="mt-2"><Layers size={8} strokeWidth={1.5} /></button>
    <button aria-label="Chats" className="mt-2"><MessagesSquare size={8} strokeWidth={1.5} /></button>
    <button aria-label="Screener" className="mb-[6px] mt-auto"><Radar size={10} strokeWidth={1.5} /></button>
    <button aria-label="Calendar" className="mb-[5px]"><CalendarDays size={9} strokeWidth={1.5} /></button>
    <button aria-label="More products" className="mb-[9px] flex size-3 items-center justify-center rounded-full bg-[#1b1c20]">
      <svg viewBox="0 0 12 12" className="size-[7px]" fill="#fff">
        {[1, 5, 9].map((y) => [1, 5, 9].map((x) => <rect key={`${x}${y}`} x={x} y={y} width="2.2" height="2.2" />))}
      </svg>
    </button>
    <button aria-label="Feed" className="mb-[6px]"><Rss size={9} strokeWidth={1.5} /></button>
    <button aria-label="Help"><CircleHelp size={9} strokeWidth={1.5} /></button>
  </nav>
);

const Taskbar = () => (
  <div className="flex h-[15px] items-center bg-gradient-to-r from-[#242424] via-[#30332a] to-[#1c1d20] font-['Open_Sans',sans-serif] text-[5px] text-white">
    <button aria-label="Start" className="flex w-[18px] justify-center">
      <svg viewBox="0 0 12 12" className="size-[7px]" fill="#fff"><path d="M0 0h5.6v5.6H0zM6.4 0H12v5.6H6.4zM0 6.4h5.6V12H0zM6.4 6.4H12V12H6.4z" /></svg>
    </button>
    <label className="flex h-full w-[107px] items-center bg-[#f1f1f1] pl-1 text-[#333]">
      <Search size={6} className="-scale-x-100" />
      <input aria-label="Search" placeholder="Type here to search" className="ml-[5px] w-[62px] bg-transparent outline-none placeholder:text-[#444]" />
      <svg viewBox="0 0 24 12" className="h-[11px] w-[22px]">
        <path d="M9 0l1.5 4.5L15 6l-4.5 1.5L9 12 7.5 7.5 3 6l4.5-1.5z" fill="#f3b81f" />
        <path d="M17 3l.8 2.2L20 6l-2.2.8L17 9l-.8-2.2L14 6l2.2-.8z" fill="#f7cf5a" />
        <circle cx="2" cy="9" r="1" fill="#3b82d6" /><circle cx="21" cy="10" r="1" fill="#8ab0dd" />
      </svg>
    </label>
    <div className="ml-[4px] flex items-center gap-[10px]">
      <svg viewBox="0 0 16 16" className="size-2" fill="none" stroke="#fff" strokeWidth="1.5"><path d="M2 1v3h12V1M2 15v-3h12v3M3 8h10" /></svg>
      <svg viewBox="0 0 16 16" className="size-[9px]"><path d="M5 1h5l3 6-4 8H5L2 9z" fill="#2f8fe0" /><path d="M9 1l5 6-3 8-4-5z" fill="#e0568f" /><path d="M2 9l3-8 3 5-2 9z" fill="#48c0a5" /><path d="M7 12l5-2-1 5H6z" fill="#f0a03a" /></svg>
      <svg viewBox="0 0 16 16" className="size-[9px]"><circle cx="8" cy="8" r="8" fill="#1f8fd8" /><path d="M1 6a7.5 7.5 0 0 1 14 1c0 3-4 3-5 2 1-3-5-5-9-3z" fill="#4bd18f" /><path d="M6 8c0 4 4 6 8 4-3 5-9 4-11 0-1-3 1-5 3-4z" fill="#0c4c92" /></svg>
      <svg viewBox="0 0 16 16" className="size-[9px]"><path d="M4 2h11v12H4z" fill="#4bb3ee" /><path d="M4 8l6 4 5-4v6H4z" fill="#7fd0f7" /><path d="M0 5h8v8H0z" fill="#0f6cbd" /><circle cx="4" cy="9" r="2" fill="none" stroke="#fff" /></svg>
      <svg viewBox="0 0 16 16" className="size-2"><path d="M0 2h6l2 2h8v10H0z" fill="#f5c64a" /><path d="M3 9h10v5H3z" fill="#3f9bdc" /><path d="M0 5h16v3H0z" fill="#fbdf85" /></svg>
      <svg viewBox="0 0 16 16" className="size-[9px]"><path d="M1 3h14v12H1z" fill="#f4f4f4" /><path d="M5 3V1h6v2" fill="none" stroke="#ddd" /><path d="M4 6h3v3H4z" fill="#f25022" /><path d="M9 6h3v3H9z" fill="#7fba00" /><path d="M4 10h3v3H4z" fill="#00a4ef" /><path d="M9 10h3v3H9z" fill="#ffb900" /></svg>
    </div>
    <span className="ml-[4px] flex h-full w-[18px] items-center justify-center border-b border-[#8ab8e6] bg-[#4b5156]">
      <svg viewBox="0 0 16 16" className="size-[9px]"><circle cx="8" cy="8" r="7.5" fill="#e34133" /><path d="M1 4.5A7.5 7.5 0 0 0 8 15.5L11 9z" fill="#2da94f" /><path d="M15.2 6A7.5 7.5 0 0 1 8 15.5L11 9V6z" fill="#fcc31e" /><circle cx="8" cy="8" r="3.2" fill="#3f7de8" stroke="#fff" /></svg>
    </span>
    <div className="ml-auto flex items-center">
      <span className="relative mr-1 size-2 rounded-full bg-[#f1ac3c]"><Cloud size={6} fill="#dfe8ef" color="#dfe8ef" className="absolute -bottom-px left-[3px]" /></span>
      <span className="w-[52px] whitespace-nowrap">74°F &nbsp;Mostly sunny</span>
      <div className="flex items-center gap-[3px]">
        <ChevronUp size={6} /><Cloud size={6} fill="#fff" /><Lock size={6} /><Bell size={6} fill="#fff" /><Monitor size={6} /><Volume2 size={6} />
      </div>
      <div className="w-[27px] text-center leading-[7px]">4:55 PM<br />10/9/2025</div>
      <span className="relative mr-[7px] flex w-[11px] justify-center">
        <svg viewBox="0 0 16 16" className="size-[8px]" fill="#fff"><path d="M1 1h13v10H9l-3 3v-3H1z" /></svg>
        <span className="absolute -bottom-px right-0 flex size-[5px] items-center justify-center rounded-full bg-[#44474d] text-[4px] leading-none">25</span>
      </span>
    </div>
  </div>
);

export default () => {
  return (
    <div className="min-h-screen bg-black py-[92px] font-['Roboto',sans-serif] text-[#1c1e24]">
      <div className="flex h-[5px] items-end bg-gradient-to-r from-[#26313f] via-[#56784f] via-40% to-[#05070a] to-70%">
        <div className="ml-auto mr-[45px] flex gap-3">
          {[0, 1, 2, 3, 4, 5, 6].map((i) => <span key={i} className="h-px w-[21px] bg-gray-200" />)}
          <span className="ml-[65px] h-px w-[21px] bg-gray-200" />
        </div>
      </div>
      <div className="flex">
        <div className="flex w-[7px] shrink-0 flex-col bg-gradient-to-b from-[#0c1518] via-[#10252a] to-[#071227]">
          <span className="mt-[54px] h-[23px] w-[7px] border-l-2 border-[#10181c] bg-gray-200" />
          <span className="mt-[19px] h-[30px] w-[7px] border-l-[5px] border-[#10181c] bg-gray-200" />
          <span className="mt-[166px] h-[70px] bg-[#17423f]" />
          <span className="mt-[10px] h-[60px] rounded-r-full bg-[#24613f]" />
        </div>
        <div className="flex min-w-0 flex-1 flex-col overflow-hidden bg-white">
          <TabStrip />
          <AddressBar />
          <ChartToolbar />
          <div className="flex">
            <DrawingTools />
            <main className="min-w-0 flex-1">
              <ChartPane />
              <TimeAxis />
              <ReplayBar />
              <Ranges />
              <BottomTabs />
            </main>
            <Watchlist />
            <SideBar />
          </div>
        </div>
      </div>
      <Taskbar />
    </div>
  );
};
